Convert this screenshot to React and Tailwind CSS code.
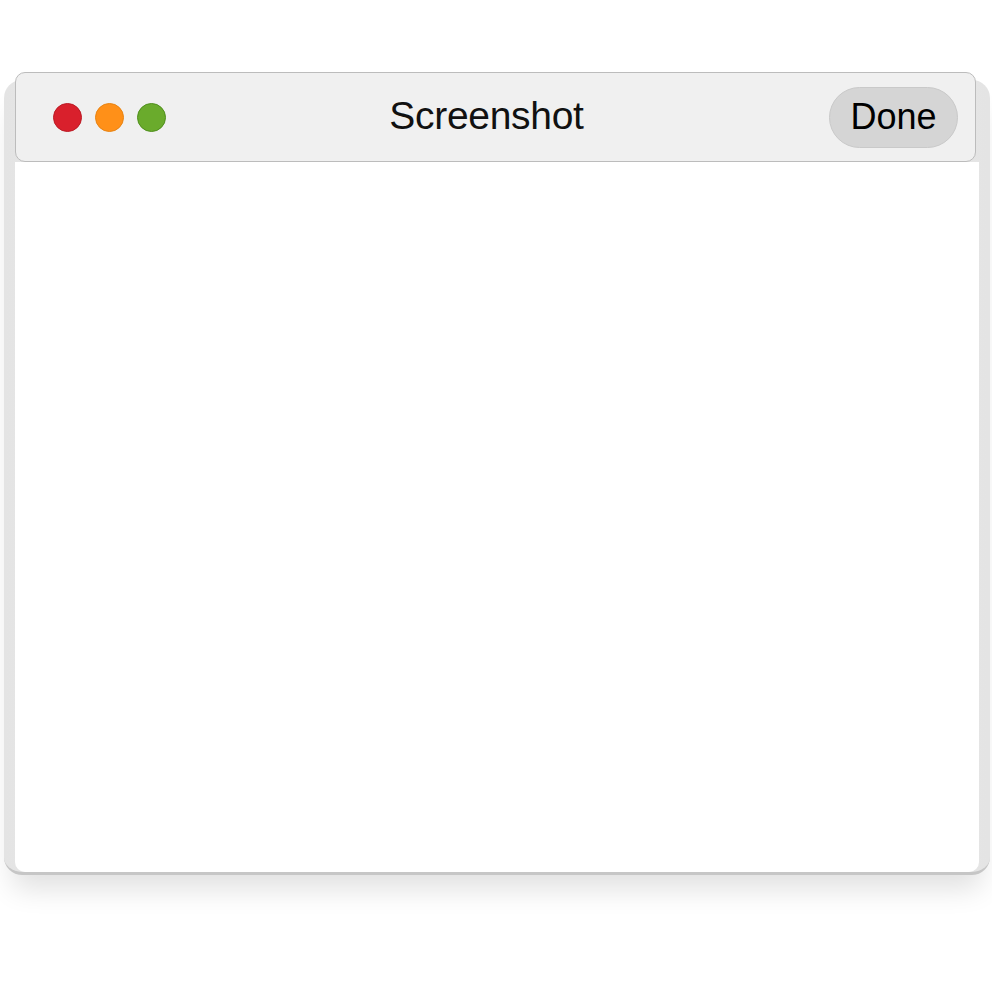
export default function App() {
  return (
    <div className="w-[992px] h-[992px] bg-white pt-[80px] overflow-hidden" style={{ fontFamily: '"Liberation Sans", Arial, sans-serif' }}>
      {/* Window frame */}
      <div className="ml-[4px] w-[986px] h-[795px] rounded-[18px] bg-gradient-to-r from-[#e4e4e4] via-[#f6f6f6] to-[#e4e4e4] border-b-[3px] border-[#c6c6c6] shadow-[0_22px_28px_-8px_rgba(0,0,0,0.12)] flex flex-col pl-[11px] pr-[11px]">
        {/* Title bar */}
        <div className="-mt-[8px] h-[90px] w-[961px] rounded-[10px] border border-[#bcbcbc] bg-[#f0f0f0] flex items-center pl-[37px] pr-[17px]">
          <div className="flex items-center gap-[13px]">
            <span className="w-[29px] h-[29px] rounded-full bg-[#d9202c] border border-[#bb1a24]" />
            <span className="w-[29px] h-[29px] rounded-full bg-[#ff9018] border border-[#e88312]" />
            <span className="w-[29px] h-[29px] rounded-full bg-[#6aab2c] border border-[#4f8f1c]" />
          </div>
          <div className="flex-1 text-center pr-[22px] pb-[3px] text-[39px] leading-none text-[#111] tracking-[-0.3px]">Screenshot</div>
          <button className="w-[129px] h-[61px] rounded-full bg-[#d5d5d5] border border-[#c9c9c9] text-[36px] leading-none text-black">Done</button>
        </div>
        {/* Content */}
        <div className="flex-1 bg-white rounded-b-[10px]" />
      </div>
    </div>
  );
}
